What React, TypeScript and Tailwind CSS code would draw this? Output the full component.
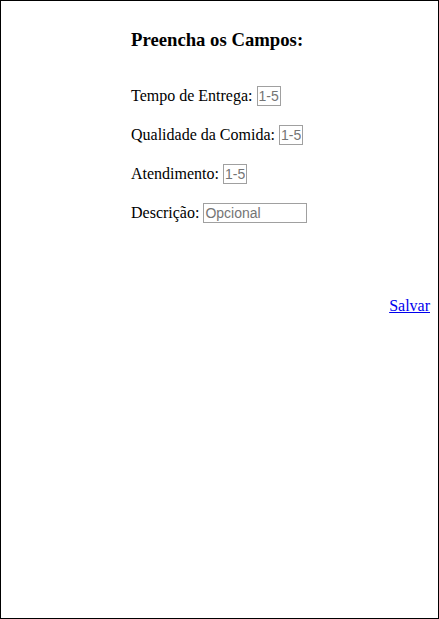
export default function App() {
  const fields = [
    { label: "Tempo de Entrega:", placeholder: "1-5", wide: false },
    { label: "Qualidade da Comida:", placeholder: "1-5", wide: false },
    { label: "Atendimento:", placeholder: "1-5", wide: false },
    { label: "Descrição:", placeholder: "Opcional", wide: true },
  ];

  return (
    <div className="h-[619px] w-[439px] border border-black bg-white font-['Liberation_Serif',serif] text-black">
      <div className="pl-[130px] pt-[28px]">
        <h3 className="text-[18.72px] font-bold leading-[22px]">Preencha os Campos:</h3>
        <div className="mt-[34px] flex flex-col gap-[17px]">
          {fields.map((f) => (
            <div key={f.label} className="flex h-[22px] items-center gap-[4px] text-[16px]">
              <span>{f.label}</span>
              <input
                type="text"
                placeholder={f.placeholder}
                className={
                  (f.wide ? "w-[104px]" : "w-[24px]") +
                  " h-[20px] border border-[#a0a0a0] px-[1px] font-['Liberation_Sans',sans-serif] text-[14px] placeholder:text-[#757575] outline-none"
                }
              />
            </div>
          ))}
        </div>
      </div>
      <div className="mt-[70px] flex justify-end pr-[8px]">
        <a href="#" className="text-[16px] text-[#0000ee] underline">
          Salvar
        </a>
      </div>
    </div>
  );
}
